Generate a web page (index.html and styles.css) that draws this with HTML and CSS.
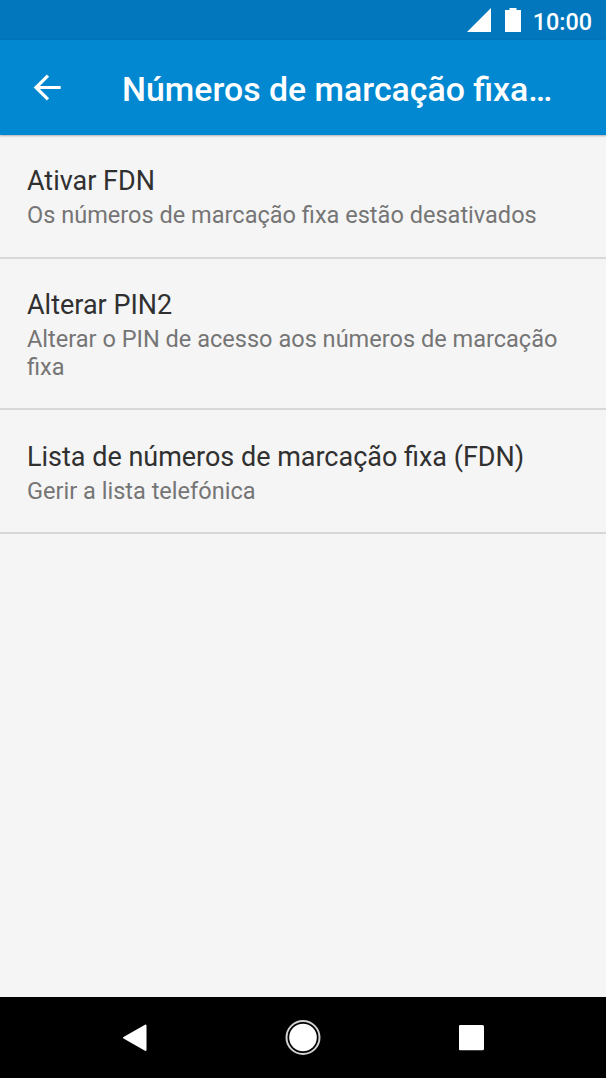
FILE: index.html
```html
<!DOCTYPE html>
<html lang="pt">
<head>
<meta charset="utf-8">
<title>Números de marcação fixa</title>
<link rel="stylesheet" href="styles.css">
</head>
<body>
<div class="screen">
  <div class="status">
    <svg class="signal" width="24" height="24" viewBox="0 0 24 24"><path d="M24 0V24H0Z"/></svg>
    <svg class="battery" width="16" height="24" viewBox="0 0 16 24"><path d="M4.500 0h7v2H16V24H0V2H4.500Z"/></svg>
    <span class="clock">10:00</span>
  </div>
  <header class="appbar">
    <svg class="back" width="28" height="28" viewBox="0 0 28 28"><path d="M27.700 13.500H4M15 1.700L3 13.500L15 25.300"/></svg>
    <h1 class="title">Números de marcação fixa…</h1>
  </header>
  <main class="list">
    <div class="item">
      <div class="name">Ativar FDN</div>
      <div class="summary">Os números de marcação fixa estão desativados</div>
    </div>
    <div class="item item-tall">
      <div class="name">Alterar PIN2</div>
      <div class="summary">Alterar o PIN de acesso aos números de marcação fixa</div>
    </div>
    <div class="item item-last">
      <div class="name">Lista de números de marcação fixa (FDN)</div>
      <div class="summary">Gerir a lista telefónica</div>
    </div>
  </main>
  <nav class="navbar">
    <svg width="26" height="28" viewBox="0 0 26 28"><path d="M24.500 1.500V26L3 13.750Z" fill="#fff" stroke="#fff" stroke-width="2" stroke-linejoin="round"/></svg>
    <svg width="36" height="36" viewBox="0 0 36 36"><circle cx="18" cy="17.500" r="16.500" fill="none" stroke="#d2d2d2" stroke-width="2"/><circle cx="18" cy="17.500" r="13.800" fill="#fff"/></svg>
    <svg width="26" height="26" viewBox="0 0 26 26"><rect y="0" x="-0.300" width="25.300" height="25.300" rx="1.500" fill="#fff"/></svg>
  </nav>
</div>
</body>
</html>
```
FILE: styles.css
```css
body { margin: 0; font-family: Roboto, sans-serif; }
.screen { display: flex; flex-direction: column; width: 606px; height: 1078px; background: #f5f5f5; overflow: hidden; }
.status { display: flex; align-items: center; justify-content: flex-end; height: 40px; padding-right: 14px; box-sizing: border-box; background: #0277bd; color: #fff; fill: #fff; }
.battery { margin: 0 12px 0 14px; }
.clock { padding-top: 4px; font-size: 23.400px; font-weight: 500; line-height: 36px; }
.appbar { display: flex; align-items: center; height: 95px; padding-left: 33px; box-sizing: border-box; background: #0288d1; color: #fff; box-shadow: 0 1px 2px rgba(0,0,0,.3); }
.back { fill: none; stroke: #fff; stroke-width: 3.200; }
.title { margin: 0 0 0 61px; padding-top: 4px; font-size: 33.850px; font-weight: 500; line-height: 40px; white-space: nowrap; }
.list { flex: 1; }
.item { padding: 30px 27px 28px; border-bottom: 2px solid #d8d8d8; }
.item-tall { padding-bottom: 27px; }
.item-last { padding-top: 31px; padding-bottom: 27px; }
.name { font-size: 26.970px; line-height: 32px; color: #303030; }
.summary { margin-top: 4px; font-size: 23.550px; line-height: 28px; color: #757575; }
.navbar { display: flex; align-items: center; justify-content: space-between; height: 81px; padding: 0 121px; box-sizing: border-box; background: #000; }
```
